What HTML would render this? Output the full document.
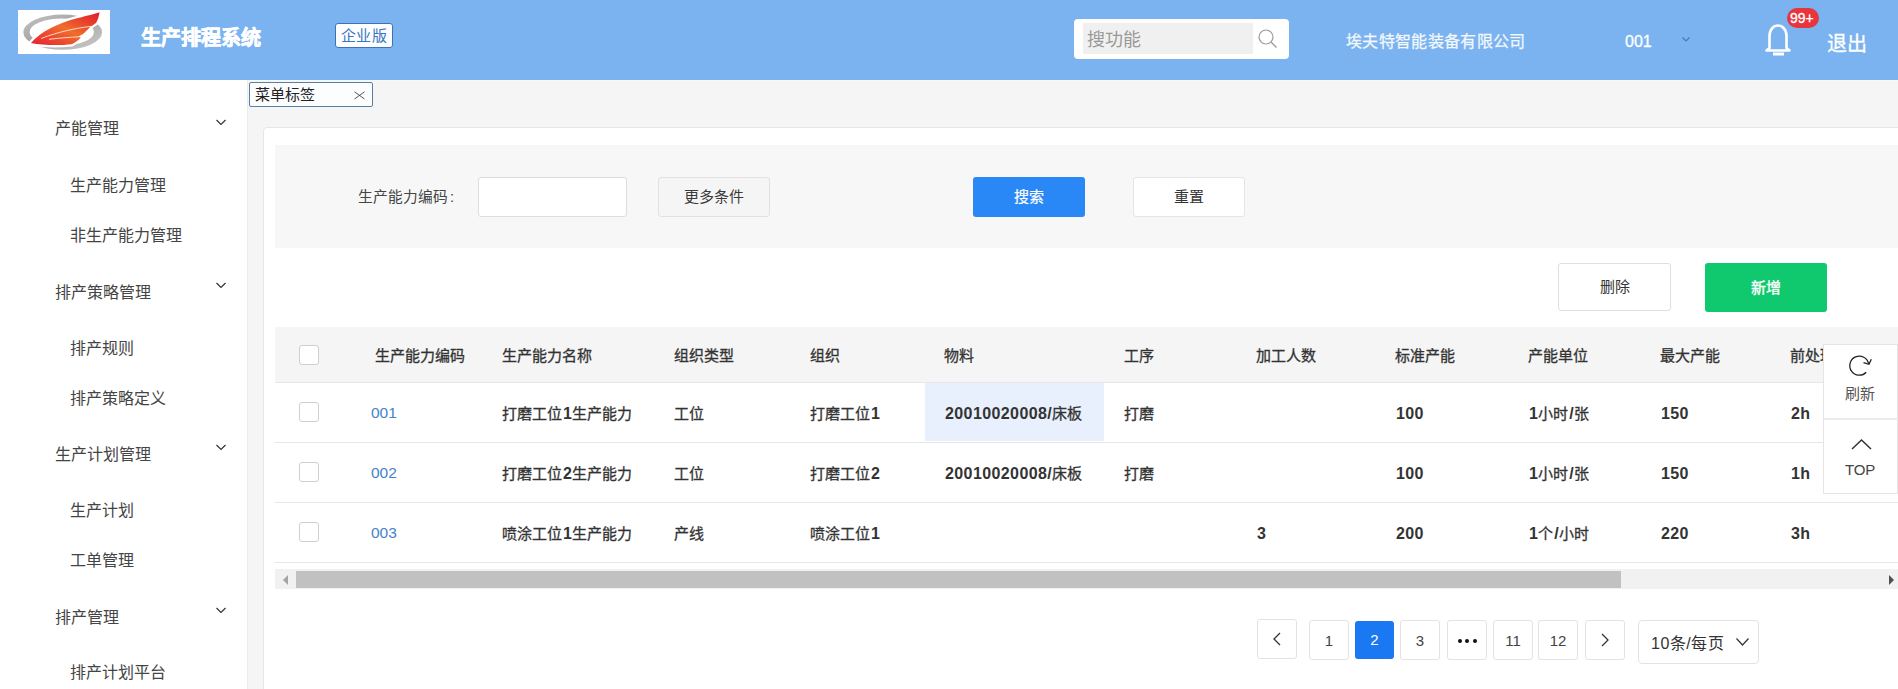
<!DOCTYPE html>
<html lang="zh-CN">
<head>
<meta charset="utf-8">
<style>
*{box-sizing:border-box;margin:0;padding:0}
html,body{width:1898px;height:689px;overflow:hidden;background:#fff;font-family:"Liberation Sans",sans-serif;color:#333}
.abs{position:absolute}
.t{position:absolute;white-space:nowrap;line-height:1}
#hdr{position:absolute;left:0;top:0;width:1898px;height:80px;background:#7ab3f0}
#side{position:absolute;left:0;top:80px;width:248px;height:609px;background:#fff;border-right:1px solid #ececec;color:#444}
#main{position:absolute;left:248px;top:80px;width:1650px;height:609px;background:#f5f5f5}
.btn{position:absolute;border-radius:3px;text-align:center}
.cb{position:absolute;width:20px;height:20px;border:1px solid #cfcfcf;border-radius:3px;background:#fff}
.pg{position:absolute;top:620px;width:40px;height:40px;border:1px solid #e3e3e3;border-radius:3px;background:#fff;text-align:center;line-height:39px;font-size:15px;color:#444}
.th{font-size:15px;color:#333;-webkit-text-stroke:0.3px #333}
.td{font-size:15px;color:#333;-webkit-text-stroke:0.3px #333}
.n{font-size:16px;letter-spacing:0.4px;margin-left:1px;font-weight:bold;-webkit-text-stroke:0}
.lk{font-weight:normal;color:#4583cc;font-size:15.5px;-webkit-text-stroke:0}
</style>
</head>
<body>
<div id="hdr">
  <div class="abs" style="left:18px;top:10px;width:92px;height:44px;background:#fff"></div>
  
  <svg class="abs" style="left:18px;top:10px" width="92" height="44">
    <defs>
      <linearGradient id="ring" x1="0" y1="0" x2="1" y2="1"><stop offset="0" stop-color="#c4c4c4"/><stop offset="0.45" stop-color="#a4a4a4"/><stop offset="1" stop-color="#cdcdcd"/></linearGradient>
      <linearGradient id="wing" x1="0" y1="1" x2="1" y2="0"><stop offset="0" stop-color="#e81e34"/><stop offset="0.5" stop-color="#ef6d2c"/><stop offset="0.8" stop-color="#e63a2c"/><stop offset="1" stop-color="#de1e2e"/></linearGradient>
    </defs>
    <path fill-rule="evenodd" fill="url(#ring)" d="M5.3 22.2 A39.4 17.6 0 1 0 84.1 22.2 A39.4 17.6 0 1 0 5.3 22.2 Z M11.6 22 A32.2 13.6 0 1 0 76 22 A32.2 13.6 0 1 0 11.6 22 Z"/>
    <path d="M13 33 C22 22 40 13 60 8 C70 5.5 76 4 81.6 2.2 C80.8 6.5 79.8 10 78 13 C76 14.5 74.5 15.5 73 16.3 L71.8 17.2 C69.5 19.8 67.5 22 65 24 C63 25.3 61.5 26 60.5 26.6 L62.8 27.4 C60 30.5 57 32.5 53.7 34.2 C42 35.5 25 35.5 13 33 Z" fill="#fff" stroke="#fff" stroke-width="4.5"/>
    <path d="M13 33 C22 22 40 13 60 8 C70 5.5 76 4 81.6 2.2 C80.8 6.5 79.8 10 78 13 C76 14.5 74.5 15.5 73 16.3 L71.8 17.2 C69.5 19.8 67.5 22 65 24 C63 25.3 61.5 26 60.5 26.6 L62.8 27.4 C60 30.5 57 32.5 53.7 34.2 C42 35.5 25 35.5 13 33 Z" fill="url(#wing)"/>
    <path d="M23 28.5 C40 22 58 18 73 16.4" fill="none" stroke="#ffe6d0" stroke-width="0.9"/>
    <path d="M31 29.3 C42 28 52 27.2 61.5 26.8" fill="none" stroke="#ffe6d0" stroke-width="0.9"/>
  </svg>
  <svg class="abs" style="left:1680px;top:34px" width="12" height="10"><path d="M2.5 3.5 L6 7 L9.5 3.5" fill="none" stroke="#3d78c8" stroke-width="1.1"/></svg>
  <svg class="abs" style="left:1762px;top:22px" width="32" height="36"><path d="M7.5 26 L7.5 14 C7.5 7.5 11.5 3.5 16 3.5 C20.5 3.5 24.5 7.5 24.5 14 L24.5 26 L27.5 28.5 L4.5 28.5 Z" fill="none" stroke="#fff" stroke-width="2.6" stroke-linejoin="round"/><rect x="11" y="30.5" width="11" height="3" fill="#fff"/></svg>
  <div class="t" style="left:141px;top:28px;font-size:20px;font-weight:bold;color:#fff;-webkit-text-stroke:0.6px #fff">生产排程系统</div>
  <div class="abs" style="left:335px;top:23px;width:58px;height:25px;border:1px solid #3f72b5;border-radius:3px;background:#fcfeff"></div>
  <div class="t" style="left:341px;top:28px;font-size:15px;color:#3b76c0;letter-spacing:0.3px">企业版</div>
  <div class="abs" style="left:1074px;top:19px;width:215px;height:40px;background:#fff;border-radius:4px"></div>
  <div class="abs" style="left:1083px;top:23px;width:170px;height:31px;background:#f0f0f0"></div>
  <div class="t" style="left:1087px;top:31px;font-size:18px;color:#999">搜功能</div>
  <svg class="abs" style="left:1256px;top:27px" width="24" height="24"><circle cx="10" cy="10" r="7" fill="none" stroke="#9a9a9a" stroke-width="1.2"/><path d="M15.2 15.2 L20.5 20.5" stroke="#9a9a9a" stroke-width="1.3"/></svg>

  <div class="t" style="left:1346px;top:34px;font-size:16px;letter-spacing:0.35px;color:#f4f8fc;-webkit-text-stroke:0.25px #f4f8fc">埃夫特智能装备有限公司</div>
  <div class="t" style="left:1625px;top:34px;font-size:16px;color:#fff;-webkit-text-stroke:0.3px #fff">001</div>
  <div class="t" style="left:1827px;top:34px;font-size:20px;color:#fff;-webkit-text-stroke:0.3px #fff">退出</div>
  <div class="abs" style="left:1787px;top:8px;width:32px;height:20px;border-radius:10px;background:#e8343c"></div>
  <div class="t" style="left:1790px;top:11px;font-size:14px;color:#fff;-webkit-text-stroke:0.3px #fff">99+</div>
</div>
<div id="side">
  <svg class="abs" style="left:214px;top:38px" width="14" height="10"><path d="M2.5 2 L7 6.5 L11.5 2" fill="none" stroke="#333" stroke-width="1.2"/></svg><svg class="abs" style="left:214px;top:201px" width="14" height="10"><path d="M2.5 2 L7 6.5 L11.5 2" fill="none" stroke="#333" stroke-width="1.2"/></svg><svg class="abs" style="left:214px;top:363px" width="14" height="10"><path d="M2.5 2 L7 6.5 L11.5 2" fill="none" stroke="#333" stroke-width="1.2"/></svg><svg class="abs" style="left:214px;top:526px" width="14" height="10"><path d="M2.5 2 L7 6.5 L11.5 2" fill="none" stroke="#333" stroke-width="1.2"/></svg>
  <div class="t" style="left:55px;top:41px;font-size:16px">产能管理</div>
  <div class="t" style="left:70px;top:98px;font-size:16px">生产能力管理</div>
  <div class="t" style="left:70px;top:148px;font-size:16px">非生产能力管理</div>
  <div class="t" style="left:55px;top:205px;font-size:16px">排产策略管理</div>
  <div class="t" style="left:70px;top:261px;font-size:16px">排产规则</div>
  <div class="t" style="left:70px;top:311px;font-size:16px">排产策略定义</div>
  <div class="t" style="left:55px;top:367px;font-size:16px">生产计划管理</div>
  <div class="t" style="left:70px;top:423px;font-size:16px">生产计划</div>
  <div class="t" style="left:70px;top:473px;font-size:16px">工单管理</div>
  <div class="t" style="left:55px;top:530px;font-size:16px">排产管理</div>
  <div class="t" style="left:70px;top:585px;font-size:16px">排产计划平台</div>
</div>
<div id="main"></div>
<div class="abs" style="left:248px;top:80px;width:1650px;height:1px;background:#f4f9ff"></div>
<!-- tab -->
<div class="abs" style="left:249px;top:82px;width:124px;height:25px;border:1px solid #5b7ea3;border-radius:2px;background:#fcfdff"></div>
<div class="t" style="left:255px;top:87px;font-size:15px;color:#222">菜单标签</div>
<svg class="abs" style="left:351px;top:88px" width="16" height="14"><path d="M3.5 3.8 L13.5 11 M13.5 3.8 L3.5 11" stroke="#444" stroke-width="0.9"/></svg>
<!-- card -->
<div class="abs" style="left:263px;top:127px;width:1700px;height:700px;background:#fff;border:1px solid #e6e6e6;border-radius:4px"></div>
<div class="abs" style="left:275px;top:145px;width:1623px;height:103px;background:#f7f7f7"></div>
<div class="t" style="left:358px;top:190px;font-size:14.7px;color:#444">生产能力编码<span style="margin-left:2px">:</span></div>
<div class="abs" style="left:478px;top:177px;width:149px;height:40px;background:#fff;border:1px solid #dedede;border-radius:3px"></div>
<div class="btn" style="left:658px;top:177px;width:112px;height:40px;background:#f5f5f5;border:1px solid #e2e2e2;line-height:38px;font-size:15px;color:#3a3a3a">更多条件</div>
<div class="btn" style="left:973px;top:177px;width:112px;height:40px;background:#2a87f6;line-height:40px;font-size:15px;color:#fff;-webkit-text-stroke:0.2px #fff">搜索</div>
<div class="btn" style="left:1133px;top:177px;width:112px;height:40px;background:#fff;border:1px solid #e5e5e5;line-height:38px;font-size:15px;color:#333">重置</div>
<div class="btn" style="left:1558px;top:263px;width:113px;height:48px;background:#fff;border:1px solid #dfdfdf;line-height:46px;font-size:15px;color:#333">删除</div>
<div class="btn" style="left:1705px;top:263px;width:122px;height:49px;background:#10c96e;line-height:49px;font-size:15px;color:#fff;-webkit-text-stroke:0.35px #fff">新增</div>
<!-- table -->
<div class="abs" style="left:275px;top:327px;width:1623px;height:56px;background:#f5f5f5;border-bottom:1px solid #e6e6e6"></div>
<div class="abs" style="left:275px;top:442px;width:1623px;height:1px;background:#e6e6e6"></div>
<div class="abs" style="left:275px;top:502px;width:1623px;height:1px;background:#e6e6e6"></div>
<div class="abs" style="left:275px;top:562px;width:1623px;height:1px;background:#e6e6e6"></div>
<div class="abs" style="left:925px;top:383px;width:179px;height:58px;background:#e7f0fc"></div>
<div class="cb" style="left:299px;top:345px"></div>
<div class="cb" style="left:299px;top:402px"></div>
<div class="cb" style="left:299px;top:462px"></div>
<div class="cb" style="left:299px;top:522px"></div>
<!-- cells -->
<div class="t th" style="left:375px;top:348px">生产能力编码</div>
<div class="t th" style="left:502px;top:348px">生产能力名称</div>
<div class="t th" style="left:674px;top:348px">组织类型</div>
<div class="t th" style="left:810px;top:348px">组织</div>
<div class="t th" style="left:944px;top:348px">物料</div>
<div class="t th" style="left:1124px;top:348px">工序</div>
<div class="t th" style="left:1256px;top:348px">加工人数</div>
<div class="t th" style="left:1395px;top:348px">标准产能</div>
<div class="t th" style="left:1528px;top:348px">产能单位</div>
<div class="t th" style="left:1660px;top:348px">最大产能</div>
<div class="t th" style="left:1790px;top:348px">前处理时间</div>
<div class="t td lk" style="left:371px;top:405px">001</div>
<div class="t td" style="left:502px;top:406px">打磨工位<span class="n">1</span>生产能力</div>
<div class="t td" style="left:674px;top:406px">工位</div>
<div class="t td" style="left:810px;top:406px">打磨工位<span class="n">1</span></div>
<div class="t td" style="left:944px;top:406px"><span class="n">20010020008/</span>床板</div>
<div class="t td" style="left:1124px;top:406px">打磨</div>
<div class="t td" style="left:1395px;top:406px"><span class="n">100</span></div>
<div class="t td" style="left:1528px;top:406px"><span class="n">1</span>小时<span class="n">/</span>张</div>
<div class="t td" style="left:1660px;top:406px"><span class="n">150</span></div>
<div class="t td" style="left:1790px;top:406px"><span class="n">2h</span></div>
<div class="t td lk" style="left:371px;top:465px">002</div>
<div class="t td" style="left:502px;top:466px">打磨工位<span class="n">2</span>生产能力</div>
<div class="t td" style="left:674px;top:466px">工位</div>
<div class="t td" style="left:810px;top:466px">打磨工位<span class="n">2</span></div>
<div class="t td" style="left:944px;top:466px"><span class="n">20010020008/</span>床板</div>
<div class="t td" style="left:1124px;top:466px">打磨</div>
<div class="t td" style="left:1395px;top:466px"><span class="n">100</span></div>
<div class="t td" style="left:1528px;top:466px"><span class="n">1</span>小时<span class="n">/</span>张</div>
<div class="t td" style="left:1660px;top:466px"><span class="n">150</span></div>
<div class="t td" style="left:1790px;top:466px"><span class="n">1h</span></div>
<div class="t td lk" style="left:371px;top:525px">003</div>
<div class="t td" style="left:502px;top:526px">喷涂工位<span class="n">1</span>生产能力</div>
<div class="t td" style="left:674px;top:526px">产线</div>
<div class="t td" style="left:810px;top:526px">喷涂工位<span class="n">1</span></div>
<div class="t td" style="left:1256px;top:526px"><span class="n">3</span></div>
<div class="t td" style="left:1395px;top:526px"><span class="n">200</span></div>
<div class="t td" style="left:1528px;top:526px"><span class="n">1</span>个<span class="n">/</span>小时</div>
<div class="t td" style="left:1660px;top:526px"><span class="n">220</span></div>
<div class="t td" style="left:1790px;top:526px"><span class="n">3h</span></div>

<!-- scrollbar -->
<div class="abs" style="left:275px;top:569px;width:1623px;height:20px;background:#f1f1f1"></div>
<div class="abs" style="left:296px;top:571px;width:1325px;height:17px;background:#c1c1c1"></div>
<svg class="abs" style="left:281px;top:573px" width="10" height="14"><path d="M7 2 L2 7 L7 12 Z" fill="#a3a3a3"/></svg>
<svg class="abs" style="left:1886px;top:573px" width="10" height="14"><path d="M3 2 L8 7 L3 12 Z" fill="#505050"/></svg>
<!-- pagination -->
<div class="pg" style="left:1257px;top:619px"><svg width="38" height="38" style="display:block"><path d="M22 13 L16 19 L22 25" fill="none" stroke="#333" stroke-width="1.3"/></svg></div>
<div class="pg" style="left:1309px">1</div>
<div class="pg" style="left:1355px;top:621px;width:39px;height:38px;border:none;background:#1a78f2;color:#fff;line-height:38px">2</div>
<div class="pg" style="left:1400px">3</div>
<div class="pg" style="left:1447px"><svg width="38" height="38" style="display:block"><circle cx="12" cy="20" r="2" fill="#111"/><circle cx="19" cy="20" r="2" fill="#111"/><circle cx="27" cy="20" r="2" fill="#111"/></svg></div>
<div class="pg" style="left:1493px">11</div>
<div class="pg" style="left:1538px">12</div>
<div class="pg" style="left:1585px"><svg width="38" height="38" style="display:block"><path d="M16 13 L22 19 L16 25" fill="none" stroke="#333" stroke-width="1.3"/></svg></div>
<div class="abs" style="left:1638px;top:620px;width:121px;height:44px;border:1px solid #e3e3e3;border-radius:4px;background:#fff"></div>
<div class="t" style="left:1651px;top:636px;font-size:16px;color:#333;letter-spacing:0.5px">10条/每页</div>
<svg class="abs" style="left:1734px;top:636px" width="18" height="12"><path d="M2.5 2.5 L8.5 9 L14.5 2.5" fill="none" stroke="#333" stroke-width="1.2"/></svg>
<!-- float panel -->
<div class="abs" style="left:1823px;top:344px;width:75px;height:150px;background:#fff;border:1px solid #e5e5e5"></div>
<div class="abs" style="left:1824px;top:418px;width:74px;height:2px;background:#ececec"></div>
<svg class="abs" style="left:1845px;top:352px" width="30" height="28"><path d="M21.2 20.2 A9.5 9.5 0 1 1 23.6 11.8" fill="none" stroke="#222" stroke-width="1.3"/><path d="M18.5 10.6 L24 12.3 L26.3 7.2" fill="none" stroke="#222" stroke-width="1.3"/></svg>
<div class="t" style="left:1845px;top:386px;font-size:15px;color:#555">刷新</div>
<svg class="abs" style="left:1850px;top:436px" width="24" height="16"><path d="M2 13 L11.5 4 L21 13" fill="none" stroke="#333" stroke-width="1.5"/></svg>
<div class="t" style="left:1845px;top:462px;font-size:15px;color:#444;letter-spacing:-0.2px">TOP</div>

</body>
</html>
